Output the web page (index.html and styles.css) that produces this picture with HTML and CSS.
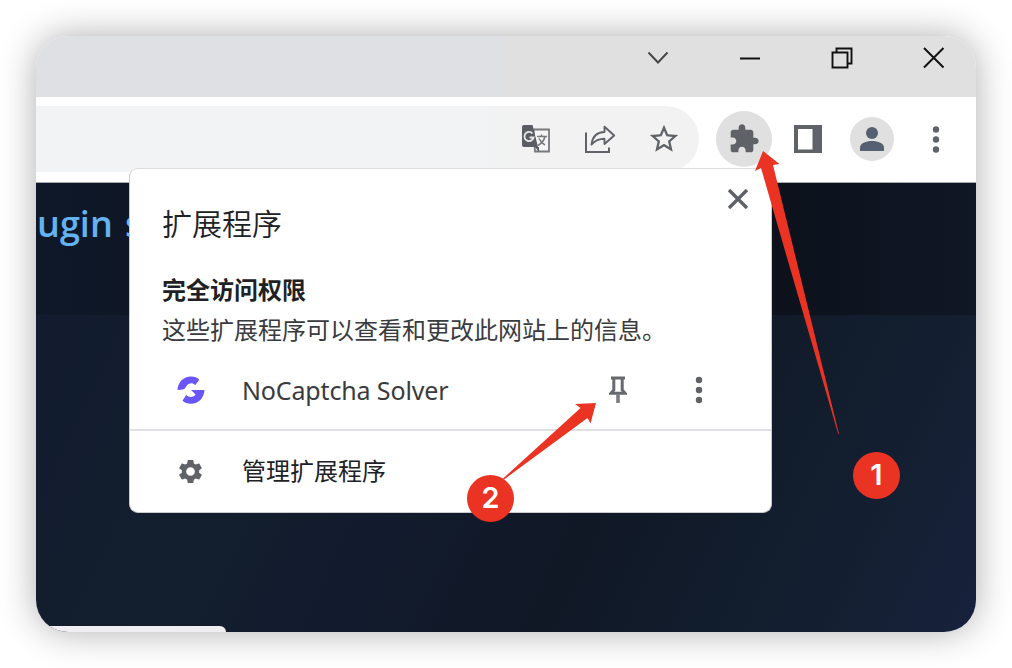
FILE: index.html
```html
<!DOCTYPE html>
<html lang="zh-CN">
<head>
<meta charset="utf-8">
<title>扩展程序</title>
<link rel="stylesheet" href="styles.css">
</head>
<body>
<div class="window">
  <div class="titlebar">
    <span class="control"><svg width="24" height="24" viewBox="0 0 24 24"><path d="M2.500 6.500l9.500 10L21.500 6.500" fill="none" stroke="#444" stroke-width="1.9"/></svg></span>
    <span class="control"><svg width="24" height="24" viewBox="0 0 24 24"><path d="M2 12.500h20" stroke="#111" stroke-width="2"/></svg></span>
    <span class="control"><svg width="24" height="24" viewBox="0 0 24 24"><path d="M2.500 6.500h15v15h-15zM6.500 6.500V2.500h15v15h-4" fill="none" stroke="#111" stroke-width="1.9"/></svg></span>
    <span class="control last"><svg width="24" height="24" viewBox="0 0 24 24"><path d="M2 2l19.500 19.500M21.500 2L2 21.500" stroke="#111" stroke-width="2"/></svg></span>
  </div>
  <div class="toolbar">
    <div class="omnibox">
      <span class="slot"><svg width="30" height="30" viewBox="0 0 30 30"><path d="M12.500 5.500h15.500v22H14z" fill="#f5f5f5" stroke="#77797c" stroke-width="1.8"/><path d="M3 1h8.500l5.500 22H3a2 2 0 0 1-2-2V3a2 2 0 0 1 2-2z" fill="#5a5d61"/><path d="M11.500 9.500A4.600 4.600 0 1 0 12.500 13.500H8.500" fill="none" stroke="#e8e8e8" stroke-width="1.9"/><path d="M16 12.500h10M20.500 10.500v2M24 12.500c-1 4-3.500 7-7 9M18 14.500c1.500 3 3.500 5 6 6.500" fill="none" stroke="#77797c" stroke-width="1.6"/><path d="M14 23l4 5v-5z" fill="#5a5d61"/></svg></span>
      <span class="slot"><svg width="32" height="30" viewBox="0 0 32 30"><path d="M2 8.500v19.500h23v-4.500" fill="none" stroke="#5f6368" stroke-width="2"/><path d="M7.500 20.500C8.500 12.500 13 8.200 20.500 8V2.800l9.700 8.700-9.700 8.500v-5.200c-5.500 0-9.500 1.800-13 5.700z" fill="none" stroke="#5f6368" stroke-width="1.9" stroke-linejoin="round"/></svg></span>
      <span class="slot"><svg width="34" height="34" viewBox="0 0 24 24"><path fill="#5f6368" d="M22 9.240l-7.190-.62L12 2 9.190 8.630 2 9.240l5.460 4.730L5.820 21 12 17.270 18.180 21l-1.630-7.030L22 9.240zM12 15.400l-3.760 2.270 1-4.280-3.320-2.880 4.380-.38L12 6.100l1.710 4.040 4.380.38-3.320 2.880 1 4.280L12 15.400z"/></svg></span>
    </div>
    <div class="actions">
      <span class="slot"><span class="halo"><svg width="32" height="32" viewBox="0 0 24 24"><path fill="#5f6368" d="M20.500 11H19V7c0-1.100-.9-2-2-2h-4V3.500C13 2.120 11.880 1 10.500 1S8 2.120 8 3.500V5H4c-1.100 0-1.990.9-1.990 2v3.800H3.500c1.490 0 2.700 1.210 2.700 2.700s-1.210 2.700-2.700 2.700H2V20c0 1.100.9 2 2 2h3.800v-1.500c0-1.490 1.210-2.700 2.700-2.700s2.700 1.210 2.700 2.700V22H17c1.100 0 2-.9 2-2v-4h1.500c1.380 0 2.500-1.120 2.500-2.500S21.880 11 20.500 11z"/></svg></span></span>
      <span class="slot"><svg width="28" height="28" viewBox="0 0 28 28"><path fill="#5f6368" fill-rule="evenodd" d="M0 0h28v28H0zM4 4v20.500h14.500V4z"/></svg></span>
      <span class="slot"><span class="avatar"><svg width="24" height="24" viewBox="0 0 24 24"><circle cx="12" cy="6" r="6" fill="#556170"/><path d="M0 24v-3.500c0-8.700 24-8.700 24 0V24z" fill="#556170"/></svg></span></span>
      <span class="slot"><svg width="8" height="28" viewBox="0 0 8 28"><g fill="#5f6368"><circle cx="4" cy="4.500" r="3.200"/><circle cx="4" cy="14.500" r="3.200"/><circle cx="4" cy="24.500" r="3.200"/></g></svg></span>
    </div>
  </div>
  <div class="page">
    <div class="banner"><span class="banner-text">lugin s</span></div>
    <div class="content"><div class="card"></div></div>
  </div>

  <section class="popup">
    <svg class="close" width="22" height="22" viewBox="0 0 22 22"><path d="M2 2l18 18M20 2L2 20" stroke="#5f6368" stroke-width="3.400"/></svg>
    <h1 class="title">扩展程序</h1>
    <h2 class="subtitle">完全访问权限</h2>
    <p class="description">这些扩展程序可以查看和更改此网站上的信息。</p>
    <div class="row extension">
      <svg class="row-icon" width="28" height="28" viewBox="0 0 28 28"><g fill="#6a55fa"><path d="M.5 14C1 6 6.500.5 14 .5c3.500 0 6.200 1.200 8.300 3l-4.100 5.700c-1.300-1.400-2.400-2-4-2-3 0-4.400 2.200-5.600 4.300-1 1.800-3.500 2.500-8.100 2.500z"/><path d="M27.500 14C27 22 21.500 27.800 14 27.800c-3.500 0-6.500-1.300-8.500-3.100L9.200 19c1.300 1.200 2.800 1.900 4.400 1.900 2.500 0 4-1 5-2.500L14 14z"/></g></svg>
      <span class="label latin">NoCaptcha Solver</span>
      <svg class="pin" width="18" height="28" viewBox="0 0 18 28"><path d="M2 2h14M4.800 2v12L2 17.200h14L13.200 14V2" fill="none" stroke="#66696d" stroke-width="3"/><path d="M9 18v9" stroke="#797c80" stroke-width="3.600"/></svg>
      <svg class="more" width="8" height="28" viewBox="0 0 8 28"><g fill="#5f6368"><circle cx="4" cy="4" r="3.200"/><circle cx="4" cy="14" r="3.200"/><circle cx="4" cy="24" r="3.200"/></g></svg>
    </div>
    <div class="row manage">
      <svg class="row-icon" width="29" height="29" viewBox="0 0 24 24"><path fill="#5f6368" d="M19.140 12.940c.04-.3.060-.61.060-.94 0-.32-.02-.64-.07-.94l2.030-1.580c.18-.14.230-.41.120-.61l-1.920-3.320c-.12-.22-.37-.29-.59-.22l-2.390.96c-.5-.38-1.030-.7-1.620-.94l-.36-2.540c-.04-.24-.24-.41-.48-.41h-3.840c-.24 0-.43.17-.47.41l-.36 2.540c-.59.24-1.130.57-1.620.94l-2.390-.96c-.22-.08-.47 0-.59.22L2.740 8.870c-.12.21-.08.47.12.61l2.030 1.580c-.05.3-.09.63-.09.94s.02.64.07.94l-2.030 1.580c-.18.14-.23.41-.12.610l1.920 3.320c.12.22.37.29.59.22l2.390-.96c.5.38 1.030.7 1.620.94l.36 2.540c.05.24.24.41.48.41h3.840c.24 0 .44-.17.47-.41l.36-2.540c.59-.24 1.130-.56 1.620-.94l2.390.96c.22.080.47 0 .59-.22l1.920-3.320c.12-.22.070-.47-.12-.61l-2.010-1.580zM12 15.600c-1.980 0-3.600-1.620-3.600-3.600s1.620-3.600 3.600-3.600 3.600 1.620 3.600 3.600-1.620 3.600-3.600 3.600z"/></svg>
      <span class="label">管理扩展程序</span>
    </div>
  </section>
</div>

<svg class="arrows" width="1012" height="668" viewBox="0 0 1012 668"><g fill="#eb3324"><path d="M763 151l16.500 13-6.500 1 66 269h-.8L761 168l-6 3z"/><path d="M596 403l-5.500 20.500-3-5.500L504 479.500l-1-1L580.500 408l-5.500-4z"/></g></svg>
<span class="badge badge-one">1</span>
<span class="badge badge-two">2</span>
</body>
</html>
```
FILE: styles.css
```css
* { box-sizing: border-box; }

body {
  margin: 0;
  width: 1012px;
  height: 668px;
  padding: 36px;
  position: relative;
  overflow: hidden;
  background: #fff;
  font-family: "Noto Sans", "Noto Sans CJK SC", sans-serif;
}

svg { display: block; flex: none; }

.window {
  position: relative;
  width: 940px;
  height: 596px;
  border-radius: 32px;
  box-shadow: 0 0 36px rgba(0, 0, 0, .32);
  display: flex;
  flex-direction: column;
}

.titlebar {
  height: 61px;
  flex: none;
  display: flex;
  justify-content: flex-end;
  background: linear-gradient(90deg, #dee0e4 0 467px, #e0e0e0 468px);
  border-radius: 32px 32px 0 0;
}
.control { width: 92px; height: 44px; display: flex; align-items: center; justify-content: center; }
.control.last { width: 88px; padding-left: 4px; }

.toolbar {
  height: 86px;
  flex: none;
  display: flex;
  align-items: flex-start;
  padding-top: 9px;
  background: #fff;
  border-bottom: 1px solid #a8abb0;
}
.omnibox {
  width: 663px;
  height: 66px;
  padding-right: 3px;
  display: flex;
  justify-content: flex-end;
  border-radius: 0 33px 33px 0;
  background: linear-gradient(90deg, #f1f3f4 0 450px, #f2f2f2 470px);
}
.actions { display: flex; margin-left: 13px; }
.slot { width: 64px; height: 66px; display: flex; align-items: center; justify-content: center; }
.halo { width: 56px; height: 56px; padding-right: 1px; border-radius: 50%; background: #e0e0e0; display: flex; align-items: center; justify-content: center; }
.avatar { width: 44px; height: 44px; border-radius: 50%; background: #e0e0e0; display: flex; align-items: center; justify-content: center; }

.page {
  flex: 1;
  display: flex;
  flex-direction: column;
  overflow: hidden;
  border-radius: 0 0 32px 32px;
}
.banner {
  height: 132px;
  flex: none;
  overflow: hidden;
  background: linear-gradient(90deg, #0f1828, #0c111b 78%, #101725);
}
.banner-text {
  display: block;
  margin: 16px 0 0 -9px;
  font: 600 36px/50px "Open Sans", sans-serif;
  word-spacing: 3px;
  color: #63b3f3;
  white-space: nowrap;
}
.content {
  flex: 1;
  display: flex;
  align-items: flex-end;
  background: linear-gradient(115deg, #121c2e, #131e2e 25%, #121b2d 40%, #101826 60%, #131f30 84%, #18213c);
}
.card { width: 190px; height: 6px; background: #f0eef2; border-radius: 0 9px 0 0; }

.popup {
  position: absolute;
  left: 93px;
  top: 132px;
  width: 643px;
  height: 345px;
  border: 1px solid #c9cbce;
  border-top-color: #dcdddf;
  border-radius: 9px;
  background: #fff;
  color: #202124;
}
.close { position: absolute; right: 22px; top: 19px; }
.title, .subtitle, .description { margin: 0 0 0 32px; white-space: nowrap; }
.title { padding-top: 33px; font-size: 30px; line-height: 44px; font-weight: 350; }
.subtitle { margin-top: 26px; font-size: 24px; line-height: 36px; font-weight: 700; }
.description { margin-top: 4px; font-size: 24px; line-height: 36px; color: #3a3b3e; }
.row { display: flex; align-items: center; padding-left: 47px; }
.extension { height: 83px; padding-top: 2px; border-bottom: 2px solid #dfe0e3; }
.manage { height: 80px; }
.manage .row-icon { margin-left: -1px; }
.label { margin-left: 37px; font-size: 24px; line-height: 36px; white-space: nowrap; }
.latin { width: 367px; font-size: 25px; letter-spacing: -.15px; color: #3a3b3e; }
.more { margin-left: 68px; }

.arrows { position: absolute; left: 0; top: 0; }
.badge {
  position: absolute;
  width: 47px;
  height: 47px;
  border-radius: 50%;
  background: #eb3324;
  color: #fff;
  font: 600 29px/45px Inter, sans-serif;
  text-align: center;
}
.badge-one { left: 853px; top: 452px; }
.badge-two { left: 467px; top: 475px; }
```
